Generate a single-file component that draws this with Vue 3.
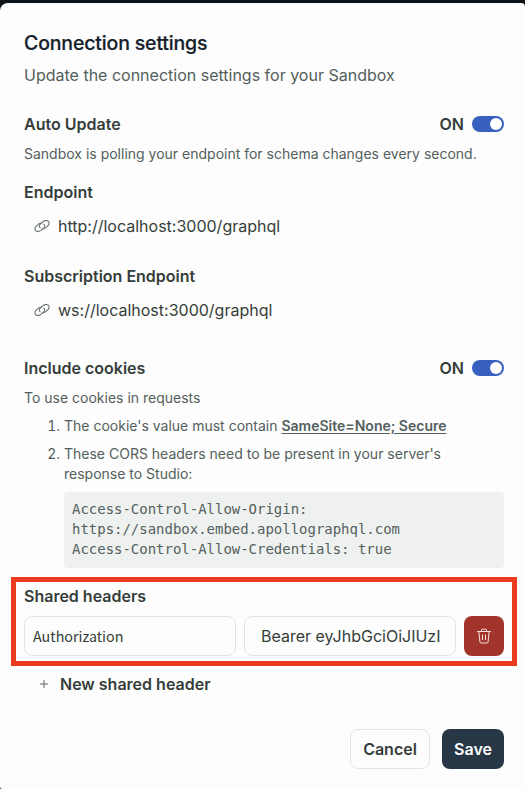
<script setup>
import { ref } from 'vue'

const endpoints = [
  { label: 'Endpoint', url: 'http://localhost:3000/graphql', kind: 'http' },
  { label: 'Subscription Endpoint', url: 'ws://localhost:3000/graphql', kind: 'ws' },
]
const autoUpdate = ref(true)
const cookies = ref(true)
</script>

<template>
  <main class="backdrop">
    <section class="modal">
      <h1 class="title">Connection settings</h1>
      <p class="subtitle">Update the connection settings for your Sandbox</p>

      <div class="row auto">
        <h2>Auto Update</h2>
        <button class="toggle" @click="autoUpdate = !autoUpdate">
          <span>{{ autoUpdate ? 'ON' : 'OFF' }}</span>
          <span class="track" :class="{ off: !autoUpdate }"><i class="knob"></i></span>
        </button>
      </div>
      <p class="note">Sandbox is polling your endpoint for schema changes every second.</p>

      <div v-for="e in endpoints" :key="e.kind" class="endpoint" :class="e.kind">
        <h2>{{ e.label }}</h2>
        <div class="url">
          <svg width="16" height="16" viewBox="0 0 16 16" fill="none" stroke="#69726f" stroke-width="1.1" stroke-linecap="round">
            <path d="M6.2 9.9C5 9 5.1 7.300 6.200 6.100L8.700 3.800C10 2.700 12.800 2 14.300 3.200C15.700 4.500 15.100 6.600 13.700 7.900L12.100 9.400C11 10.400 9.700 10.900 8.500 10.700" />
            <path d="M9.800 6.100C11 7 10.900 8.700 9.800 9.900L7.300 12.200C6 13.300 3.200 14 1.700 12.800C.3 11.500.9 9.400 2.300 8.100L3.900 6.600C5 5.600 6.300 5.100 7.500 5.300" />
          </svg>
          <span>{{ e.url }}</span>
        </div>
      </div>

      <div class="row cookies">
        <h2>Include cookies</h2>
        <button class="toggle" @click="cookies = !cookies">
          <span>{{ cookies ? 'ON' : 'OFF' }}</span>
          <span class="track" :class="{ off: !cookies }"><i class="knob"></i></span>
        </button>
      </div>
      <p class="note">To use cookies in requests</p>
      <ol class="steps">
        <li>
          <span class="num">1.</span>
          <div>The cookie's value must contain <a>SameSite=None; Secure</a></div>
        </li>
        <li>
          <span class="num">2.</span>
          <div>These CORS headers need to be present in your server's<br />response to Studio:
            <pre class="code">Access-Control-Allow-Origin:
https://sandbox.embed.apollographql.com
Access-Control-Allow-Credentials: true</pre>
          </div>
        </li>
      </ol>

      <div class="shared">
        <h2>Shared headers</h2>
        <div class="fields">
          <div class="field name">Authorization</div>
          <div class="field value">Bearer eyJhbGciOiJIUzI</div>
          <button class="delete" aria-label="Delete header">
            <svg width="16" height="16" viewBox="0 0 16 16" fill="none" stroke="#f6e4e2" stroke-width="1" stroke-linecap="round" stroke-linejoin="round">
              <path d="M1.500 3.500h13M5.500 3.300V2.200Q5.500 1.200 6.500 1.200h3Q10.500 1.200 10.500 2.200v1.100M2.900 3.500l1 10.300Q4 15 5.100 15h5.800Q12 15 12.100 13.800l1-10.300M6.500 7v4.700M9.500 7v4.700" />
            </svg>
          </button>
        </div>
      </div>

      <button class="add">
        <svg width="10" height="10" viewBox="0 0 10 10" stroke="#5c6663" stroke-width="1"><path d="M1 5h8M5 1v8" /></svg>
        <span>New shared header</span>
      </button>

      <footer>
        <button class="btn cancel">Cancel</button>
        <button class="btn save">Save</button>
      </footer>
    </section>
  </main>
</template>

<style>
body { background: #0e1318; }
</style>

<style scoped>
* { box-sizing: border-box; }
.backdrop { height: 789px; padding-top: 3px; background: #0e1318; overflow: hidden; }
.modal {
  height: 786px; padding: 26px 21px 20px 24px; background: #fdfdfd;
  border-radius: 8px 4px 0 2px; display: flex; flex-direction: column;
  font-family: Inter, "Liberation Sans", sans-serif; font-size: 16px; line-height: 24px; color: #353d3b;
}
h1, h2, p, ol, pre { margin: 0; padding: 0; }
button { border: 0; padding: 0; background: none; font: inherit; color: inherit; cursor: pointer; }
.title { font-size: 19.5px; line-height: 28px; font-weight: 500; color: #15212b; letter-spacing: -0.16px; -webkit-text-stroke: 0.2px #15212b; }
.subtitle { margin-top: 6px; color: #53605c; }
h2 { font-size: 16px; line-height: 24px; font-weight: 600; white-space: nowrap; }
.row { display: flex; justify-content: space-between; align-items: center; height: 24px; }
.auto { margin-top: 25px; }
.toggle { display: flex; align-items: center; gap: 8px; font-weight: 600; }
.track { width: 32px; height: 16px; border-radius: 8px; background: #3860be; padding: 2px; display: flex; justify-content: flex-end; }
.track.off { background: #8a9491; justify-content: flex-start; }
.knob { width: 12px; height: 12px; border-radius: 50%; background: #fff; }
.note { margin-top: 8px; font-size: 14px; line-height: 20px; color: #53605c; }
.endpoint { margin-top: 16px; }
.endpoint.ws { margin-top: 26px; }
.url { margin-top: 10px; padding-left: 10px; display: flex; align-items: center; gap: 8px; }
.cookies { margin-top: 34px; }
.steps { list-style: none; margin-top: 8px; font-size: 14px; line-height: 20px; color: #53605c; display: flex; flex-direction: column; gap: 8px; }
.steps li { display: flex; white-space: nowrap; }
.steps li > div { flex: 1; }
.num { width: 40px; padding-right: 4px; text-align: right; font-variant-numeric: tabular-nums; }
.steps a { font-weight: 600; text-decoration: underline; text-underline-offset: 2px; }
.code { margin-top: 8px; padding: 7px 8px 9px; border-radius: 4px; background: #eff1f0; font: 13.97px/20px "DejaVu Sans Mono", monospace; }
.shared { margin: 9px -13px 0 -13px; padding: 2px 8px 5px 8px; border: 5px solid #ea3b1f; }
.fields { margin-top: 8px; display: flex; gap: 8px; }
.field { width: 212px; height: 40px; border: 1px solid #e3e6e5; border-radius: 8px; display: flex; align-items: center; white-space: nowrap; overflow: hidden; }
.name { padding-left: 8px; font-family: "Noto Sans CJK SC", sans-serif; font-size: 14.3px; }
.value { padding-left: 16px; }
.delete { width: 40px; height: 40px; border-radius: 8px; background: #a3342b; display: flex; align-items: center; justify-content: center; }
.add { margin: 6px 0 0 15px; height: 24px; display: flex; align-items: center; align-self: flex-start; gap: 11px; font-weight: 600; }
footer { margin-top: auto; display: flex; justify-content: flex-end; gap: 12px; }
.btn { height: 40px; border-radius: 8px; font-weight: 600; }
.cancel { width: 80px; border: 1px solid #e3e6e5; }
.save { width: 62px; background: #273746; color: #fff; }
</style>
